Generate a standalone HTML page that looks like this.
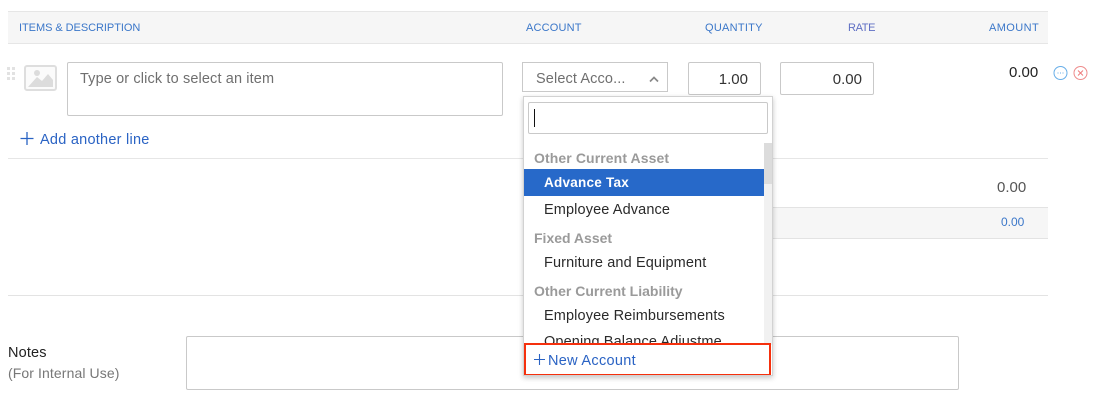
<!DOCTYPE html>
<html><head><meta charset="utf-8"><style>
html,body{margin:0;padding:0;background:#fff}
body{width:1096px;height:406px;position:relative;overflow:hidden;font-family:"Liberation Sans",sans-serif;font-size:14.5px;color:#222}
.a{position:absolute;white-space:nowrap}
.b{position:absolute;box-sizing:border-box;background:#fff;border:1px solid #c9c9c9;border-radius:2px}
.h{font-size:11px;color:#3b77c9;top:21px;line-height:13px}
.l{position:absolute;left:8px;width:1040px;height:1px;background:#e6e6e6}
.g{color:#9a9a9a;font-weight:bold;left:10px;line-height:16px;font-size:14px}
.i{color:#2a2a2a;left:20px;line-height:16px;letter-spacing:.12px}
</style></head><body>
<div class="a" style="left:8px;top:11px;width:1040px;height:33px;box-sizing:border-box;background:#f6f6f6;border-top:1px solid #e6e6e6;border-bottom:1px solid #e6e6e6"></div>
<div class="a h" style="left:19px;letter-spacing:-.05px;top:22px">ITEMS &amp; DESCRIPTION</div>
<div class="a h" style="left:526px;letter-spacing:.18px;top:22px">ACCOUNT</div>
<div class="a h" style="left:705px;letter-spacing:.27px;top:22px">QUANTITY</div>
<div class="a h" style="left:848px;letter-spacing:-.35px;color:#5f6fc4;top:22px">RATE</div>
<div class="a h" style="left:989px;letter-spacing:.4px;top:22px">AMOUNT</div>

<svg class="a" style="left:6px;top:66px" width="10" height="15"><g fill="#e2e2e2"><rect x="1" y="1" width="3" height="3"/><rect x="6" y="1" width="3" height="3"/><rect x="1" y="6" width="3" height="3"/><rect x="6" y="6" width="3" height="3"/><rect x="1" y="11" width="3" height="3"/><rect x="6" y="11" width="3" height="3"/></g></svg>
<svg class="a" style="left:24px;top:65px" width="33" height="26"><rect x="1" y="1" width="31" height="24" rx="2" fill="#fbfbfb" stroke="#dedede" stroke-width="2"/><circle cx="13" cy="8" r="3" fill="#dcdcdc"/><path d="M4 22 L13 12 L18 16 L24 9 L29 15 V22 Z" fill="#dcdcdc"/></svg>

<div class="b" style="left:67px;top:62px;width:436px;height:54px"></div>
<div class="a" style="left:80px;top:71px;color:#6f6f6f;line-height:16px;letter-spacing:.13px">Type or click to select an item</div>
<svg class="a" style="left:20px;top:132px" width="14" height="14"><path d="M7 0V13M0.500 6.500H13.500" stroke="#2a63c4" stroke-width="1.300" fill="none"/></svg>
<div class="a" style="left:40px;top:132px;color:#2a63c4;line-height:16px;letter-spacing:.25px">Add another line</div>

<div class="b" style="left:522px;top:62px;width:146px;height:30px;border-radius:0"></div>
<div class="a" style="left:536px;top:71px;color:#6f6f6f;line-height:16px;letter-spacing:.12px">Select Acco...</div>
<svg class="a" style="left:648px;top:75px" width="12" height="8"><path d="M2 6.500L6 2.500L10 6.500" stroke="#888" stroke-width="1.700" fill="none"/></svg>
<div class="b" style="left:688px;top:62px;width:73px;height:33px"></div>
<div class="a" style="left:708px;top:72px;line-height:16px;color:#333;width:40px;text-align:right;font-size:15px">1.00</div>
<div class="b" style="left:780px;top:62px;width:94px;height:33px"></div>
<div class="a" style="left:822px;top:72px;line-height:16px;color:#333;width:40px;text-align:right;font-size:15px">0.00</div>
<div class="a" style="left:1009px;top:65px;line-height:16px;color:#222;font-size:15px">0.00</div>
<svg class="a" style="left:1052px;top:65px" width="38" height="16"><circle cx="8.500" cy="8" r="6.500" fill="none" stroke="#67aee8"/><g fill="#67aee8"><rect x="5.500" y="7.500" width="1" height="1"/><rect x="8" y="7.500" width="1" height="1"/><rect x="10.500" y="7.500" width="1" height="1"/></g><circle cx="28.500" cy="8" r="6.500" fill="none" stroke="#ee8b8b"/><path d="M26 5.500L31 10.500M31 5.500L26 10.500" stroke="#ee7b7b"/></svg>

<div class="l" style="top:158px"></div>
<div class="a" style="left:523px;top:207px;width:525px;height:32px;box-sizing:border-box;background:#f6f6f6;border-top:1px solid #e3e3e3;border-bottom:1px solid #e3e3e3"></div>
<div class="a" style="left:997px;top:180px;line-height:16px;color:#555;font-size:15px">0.00</div>
<div class="a" style="left:1001px;top:216px;font-size:12px;line-height:13px;color:#3b77c9">0.00</div>
<div class="l" style="top:295px;background:#e3e3e3"></div>

<div class="a" style="left:8px;top:345px;line-height:16px;color:#222;letter-spacing:.14px">Notes</div>
<div class="a" style="left:8px;top:365px;line-height:16px;color:#777;font-size:14px;letter-spacing:.1px">(For Internal Use)</div>
<div class="b" style="left:186px;top:336px;width:773px;height:54px"></div>

<div class="a" style="left:523px;top:96px;width:250px;height:280px;box-sizing:border-box;background:#fff;border:1px solid #d2d2d2;box-shadow:0 2px 5px rgba(0,0,0,.22);overflow:hidden">
  <div class="b" style="left:4px;top:5px;width:240px;height:32px"></div>
  <div class="a" style="left:10px;top:12px;width:1px;height:18px;background:#111"></div>
  <div class="a" style="left:240px;top:46px;width:8px;height:202px;background:#f1f1f1"></div>
  <div class="a" style="left:240px;top:46px;width:8px;height:41px;background:#dcdcdc"></div>
  <div class="a g" style="top:53px;letter-spacing:.1px">Other Current Asset</div>
  <div class="a" style="left:0;top:72px;width:240px;height:27px;background:#2769c9"></div>
  <div class="a" style="left:20px;top:78px;line-height:16px;color:#fff;font-weight:bold;font-size:13.500px;letter-spacing:.25px">Advance Tax</div>
  <div class="a i" style="top:105px">Employee Advance</div>
  <div class="a g" style="top:133px">Fixed Asset</div>
  <div class="a i" style="top:158px">Furniture and Equipment</div>
  <div class="a g" style="top:186px">Other Current Liability</div>
  <div class="a i" style="top:211px">Employee Reimbursements</div>
  <div class="a" style="left:0;top:229px;width:248px;height:17px;overflow:hidden"><div class="a i" style="top:8px">Opening Balance Adjustme</div></div>
  <div class="a" style="left:0;top:246px;width:247px;height:33px;background:#fff;box-sizing:border-box;border:2px solid #f5300d"></div>
  <svg class="a" style="left:9px;top:256px" width="13" height="13"><path d="M6.500 1V12M1 6.500H12" stroke="#2a63c4" stroke-width="1.100" fill="none"/></svg>
  <div class="a" style="left:24px;top:256px;line-height:16px;color:#2a63c4;letter-spacing:.3px">New Account</div>
</div>
</body></html>
